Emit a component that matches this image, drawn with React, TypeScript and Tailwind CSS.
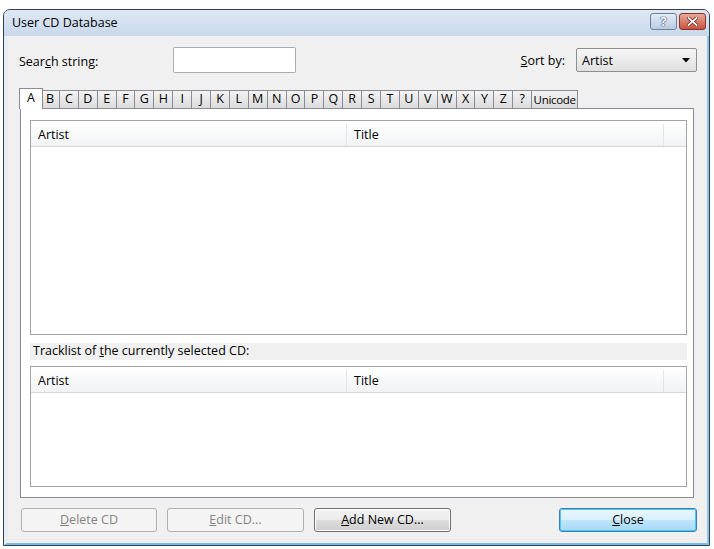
import React from 'react';

const letters = [
  'B', 'C', 'D', 'E', 'F', 'G', 'H', 'I', 'J', 'K', 'L', 'M',
  'N', 'O', 'P', 'Q', 'R', 'S', 'T', 'U', 'V', 'W', 'X', 'Y', 'Z', '?',
];

function ListView({ className }: { className: string }) {
  return (
    <div className={`border border-[#a3a3a3] bg-white ${className}`}>
      <div className="flex h-[26px] border-b border-[#d5d5d5] bg-linear-to-b from-white to-[#f2f3f5] pt-[3px] text-black">
        <div className="flex w-[316px] items-center border-r border-[#e3e4e6] pl-[7px]">Artist</div>
        <div className="flex w-[317px] items-center border-r border-[#e3e4e6] pl-[7px]">Title</div>
        <div className="flex-1" />
      </div>
    </div>
  );
}

function Tabs() {
  return (
    <div className="flex h-[20px] items-end text-black">
      {/* selected tab overlaps its neighbours by 2px */}
      <div className="relative z-10 -mb-px -ml-px flex h-[21px] w-[24px] items-center justify-center border border-b-0 border-[#898c95] bg-white pb-[2px]">
        A
      </div>
      {letters.map((l, i) => (
        <div
          key={l}
          className={`${i === 0 ? '-ml-[3px]' : '-ml-px'} flex h-[18px] w-[19.9px] items-center justify-center border border-b-0 border-[#898c95] bg-linear-to-b from-[#f3f3f3] to-[#dcdcdc]`}
        >
          {l}
        </div>
      ))}
      <div className="-ml-px flex h-[18px] w-[47px] items-center justify-center border border-b-0 border-[#898c95] bg-linear-to-b from-[#f3f3f3] to-[#dcdcdc] text-[11.5px] tracking-[-0.3px]">
        Unicode
      </div>
    </div>
  );
}

function Button({
  children,
  kind,
  className = '',
}: {
  children: React.ReactNode;
  kind: 'disabled' | 'normal' | 'default';
  className?: string;
}) {
  const look =
    kind === 'disabled'
      ? 'border-[#adb2b5] bg-[#f4f4f4] text-[#838383]'
      : kind === 'normal'
        ? 'border-[#707070] bg-[linear-gradient(#f2f2f2_0%,#ebebeb_50%,#dddddd_50%,#cfcfcf_100%)] text-black shadow-[inset_0_0_0_1px_#fcfcfc]'
        : 'border-[#3c7fb1] bg-[linear-gradient(#eaf6fd_0%,#d9f0fc_50%,#bee6fd_50%,#a7d9f5_100%)] text-black shadow-[inset_0_0_0_1px_#48c8f8]';
  return (
    <div
      className={`flex h-[24px] items-center justify-center rounded-[3px] border pt-px ${look} ${className}`}
    >
      {children}
    </div>
  );
}

export default function App() {
  return (
    <div className="relative h-[549px] w-[714px] overflow-hidden bg-white font-['Open_Sans',sans-serif] text-[12.5px] text-black">
      <div className="ml-[3px] mt-[9px] flex h-[537px] w-[707px] flex-col rounded-t-[7px] border border-[#34404d] bg-[#cfdcec]">
        {/* title bar */}
        <div className="flex h-[26px] shrink-0 items-start justify-between rounded-t-[6px] bg-linear-to-b from-[#dfe8f4] to-[#c8d8eb] pl-[8px] pr-[3px]">
          <span className="mt-[5px] text-[12.5px] leading-[16px] text-black">User CD Database</span>
          <div className="mt-[3px] flex gap-[2px]">
            <div className="flex h-[17px] w-[27px] items-center justify-center rounded-[3px] border border-[#6e8099] bg-linear-to-b from-[#e4ecf6] to-[#b9cbe2] text-[13px] font-bold leading-none text-white [text-shadow:0_0_1px_#2f4463,0_0_1px_#2f4463,0_0_1px_#2f4463]">
              ?
            </div>
            <div className="flex h-[17px] w-[27px] items-center justify-center rounded-[3px] border border-[#8a3328] bg-linear-to-b from-[#e9a99a] to-[#c8503d]">
              <svg width="11" height="9" viewBox="0 0 11 9">
                <path d="M1.5 1 L9.5 8 M9.5 1 L1.5 8" stroke="#5b1a10" strokeWidth="3.2" strokeLinecap="square" />
                <path d="M1.5 1 L9.5 8 M9.5 1 L1.5 8" stroke="#ffffff" strokeWidth="1.8" strokeLinecap="square" />
              </svg>
            </div>
          </div>
        </div>

        {/* client area */}
        <div className="flex flex-1 flex-col border-b-2 border-l-[3px] border-r-2 border-b-[#79bbe4] border-l-[#e6edf6] border-r-[#8cc4ea] bg-[#f0f0f0] px-[13px] pb-[11px] pt-[11px]">
          <div className="flex h-[26px] items-center">
            <span className="mt-[4px] w-[154px] -ml-px">
              Sear<u>c</u>h string:
            </span>
            <div className="h-[26px] w-[123px] rounded-[2px] border border-[#abadb3] border-t-[#a5acb5] bg-white" />
            <div className="flex-1" />
            <span className="mr-[11px] mt-[3px]">
              <u>S</u>ort by:
            </span>
            <div className="-mr-[3px] flex h-[24px] w-[121px] items-center justify-between rounded-[2px] border border-[#8e8f8f] bg-linear-to-b from-[#f6f6f6] to-[#e0e0e0] pl-[5px] pr-[6px]">
              <span className="pt-[2px]">Artist</span>
              <svg width="8" height="5" viewBox="0 0 8 5">
                <path d="M0 0 H8 L4 4.5 Z" fill="#000" />
              </svg>
            </div>
          </div>

          <div className="mt-[15px]">
            <Tabs />
          </div>

          <div className="flex h-[390px] flex-col border border-[#898c95] bg-white pb-[9px] pl-[9px] pr-[6px] pt-[11px]">
            <ListView className="h-[215px]" />
            <div className="mt-[8px] flex h-[17px] items-center bg-[#f0f0f0] pl-[3px]">
              <span>
                Tracklist of <u>t</u>he currently selected CD:
              </span>
            </div>
            <ListView className="mt-[6px] h-[121px]" />
          </div>

          <div className="mt-[10px] flex">
            <Button kind="disabled" className="ml-px w-[136px]">
              <span>
                <u>D</u>elete CD
              </span>
            </Button>
            <Button kind="disabled" className="ml-[10px] w-[137px]">
              <span>
                <u>E</u>dit CD...
              </span>
            </Button>
            <Button kind="normal" className="ml-[10px] w-[137px]">
              <span>
                <u>A</u>dd New CD...
              </span>
            </Button>
            <div className="flex-1" />
            <Button kind="default" className="-mr-[3px] w-[138px]">
              <span>
                <u>C</u>lose
              </span>
            </Button>
          </div>
        </div>
      </div>
    </div>
  );
}
